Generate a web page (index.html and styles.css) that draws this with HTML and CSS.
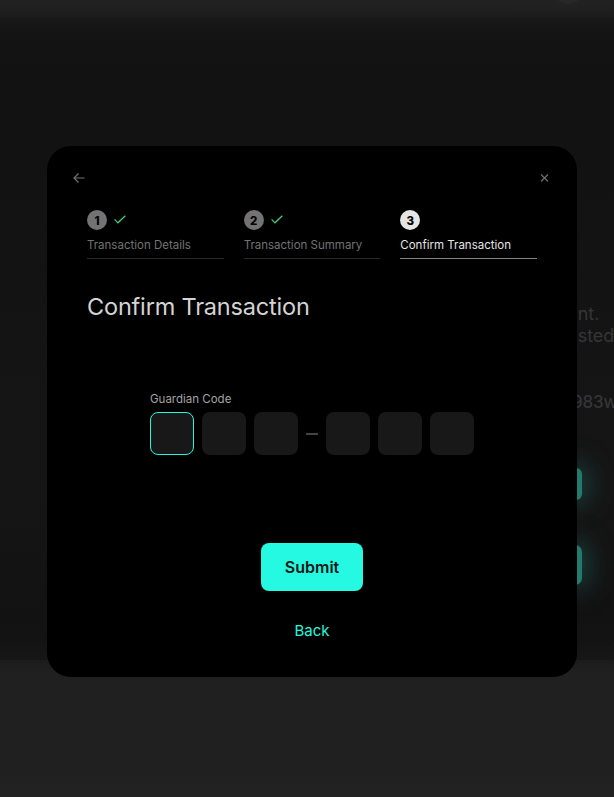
FILE: index.html
```html
<!DOCTYPE html>
<html lang="en">
<head>
<meta charset="utf-8">
<title>Confirm Transaction</title>
<link rel="stylesheet" href="styles.css">
</head>
<body>
<div class="page">
  <header class="page-top"><span class="orb"></span></header>
  <main class="page-main">
    <div class="aside">
      <p class="aside-text"><span class="l1">unt.</span><br><span class="l2">usted</span></p>
      <p class="aside-key">983w</p>
      <div class="chip"></div>
      <div class="chip chip-large"></div>
    </div>
  </main>
  <footer class="page-bottom"></footer>
</div>
<div class="overlay">
  <section class="modal" role="dialog">
    <div class="modal-bar">
      <svg class="icon" width="12" height="12" viewBox="0 0 12 12"><path d="M11.5 6H1M5.5 1.5 1 6l4.500 4.500"/></svg>
      <svg class="icon icon-close" width="9" height="9" viewBox="0 0 9 9"><path d="M1 .5l7 7M8 .5l-7 7"/></svg>
    </div>
    <ol class="steps">
      <li class="step"><div class="step-top"><span class="num">1</span><svg class="check" width="12" height="9" viewBox="0 0 12 9"><path d="M.6 4.400 4 7.800 11.300.8"/></svg></div><span class="step-label">Transaction Details</span></li>
      <li class="step"><div class="step-top"><span class="num">2</span><svg class="check" width="12" height="9" viewBox="0 0 12 9"><path d="M.6 4.400 4 7.800 11.300.8"/></svg></div><span class="step-label">Transaction Summary</span></li>
      <li class="step current"><div class="step-top"><span class="num">3</span></div><span class="step-label">Confirm Transaction</span></li>
    </ol>
    <h1 class="title">Confirm Transaction</h1>
    <div class="code">
      <div class="code-label">Guardian Code</div>
      <div class="cells">
        <span class="cell focused"></span><span class="cell"></span><span class="cell"></span>
        <span class="dash"></span>
        <span class="cell"></span><span class="cell"></span><span class="cell"></span>
      </div>
    </div>
    <div class="actions">
      <button class="submit">Submit</button>
      <a class="back">Back</a>
    </div>
  </section>
</div>
</body>
</html>
```
FILE: styles.css
```css
* { box-sizing: border-box; }
body { margin: 0; overflow: hidden; background: #202020; font-family: Inter, "Liberation Sans", sans-serif; }
.page { height: 797px; display: flex; flex-direction: column; overflow: hidden; }
.page-top { height: 18px; flex: none; position: relative; background: linear-gradient(#222, #212121 35%, #1b1b1b); }
.orb { position: absolute; left: 552px; top: -28px; width: 32px; height: 32px; border-radius: 50%; background: #272727; }
.page-main { height: 642px; flex: none; padding-left: 568px; background: linear-gradient(#181818, #141414 14px, #121212 50px, #121212 150px, #141414 330px, #151515 480px, #121212 600px, #131313 622px, #171717); }
.aside { padding-top: 285px; color: #343638; font-size: 18px; line-height: 22px; white-space: nowrap; }
.aside p { margin: 0; }
.aside-key { padding-top: 44px; margin-left: 0; font-weight: 500; font-size: 17px; letter-spacing: .3px; }
.aside .aside-key { margin-left: 4px; letter-spacing: -.2px; }
.l1 { margin-left: -1px; }
.l2 { margin-left: -1px; }
.chip { width: 14px; height: 32px; margin-top: 55px; border-radius: 6px; background: #237b6d; box-shadow: 0 0 26px 4px rgba(35, 123, 109, .55); }
.chip-large { height: 40px; margin-top: 45px; border-radius: 7px; }
.page-bottom { flex: 1; background: linear-gradient(#1c1c1c, #202020 14px, #202020 100px, #222); }

.overlay { position: fixed; inset: 0; padding: 146px 37px 120px 47px; }
.modal { width: 530px; height: 531px; padding: 26px 40px 0; border-radius: 24px; background: #000; display: flex; flex-direction: column; }
.modal-bar { display: flex; justify-content: space-between; align-items: center; height: 12px; margin: 0 -13px 0 -14px; }
.icon { fill: none; stroke: #707070; stroke-width: 1.2; }
.icon-close { margin-right: 1px; }

.steps { display: grid; grid-template-columns: repeat(3, 1fr); column-gap: 20px; margin: 26px 0 0; padding: 0; list-style: none; }
.step { height: 49px; border-bottom: 1px solid #292929; color: #737373; }
.step-top { display: flex; align-items: center; gap: 7px; height: 20px; }
.num { width: 20px; height: 20px; border-radius: 50%; background: #737373; color: #000; font-size: 11.5px; font-weight: 800; line-height: 22px; text-align: center; }
.check { fill: none; stroke: #43d17c; stroke-width: 1.2; margin-bottom: 1px; }
.step-label { display: inline-block; margin-top: 6px; font-size: 11.5px; line-height: 19px; white-space: nowrap; }
.current { border-color: #858585; color: #e5e5e5; }
.current .num { background: #e5e5e5; }

.title { margin: 32px 0 0; color: #d4d4d4; font-size: 23.5px; font-weight: 400; line-height: 32px; letter-spacing: -.18px; }
.code { align-self: center; margin-top: 68px; }
.code-label { height: 21px; color: #a3a3a3; font-size: 11.5px; line-height: 17px; }
.cells { display: flex; align-items: center; gap: 8px; }
.cell { width: 44px; height: 43px; border-radius: 8px; background: #181818; }
.focused { border: 1px solid #26f7df; }
.dash { width: 12px; height: 2px; background: #444; }
.actions { display: flex; flex-direction: column; align-items: center; margin-top: 88px; }
.submit { width: 102px; height: 48px; padding: 0; border: 0; border-radius: 8px; background: #26f9e1; color: #171717; font: 600 16px/24px Inter, sans-serif; }
.back { margin-top: 28px; color: #26f7df; font-size: 15px; line-height: 24px; }
```
